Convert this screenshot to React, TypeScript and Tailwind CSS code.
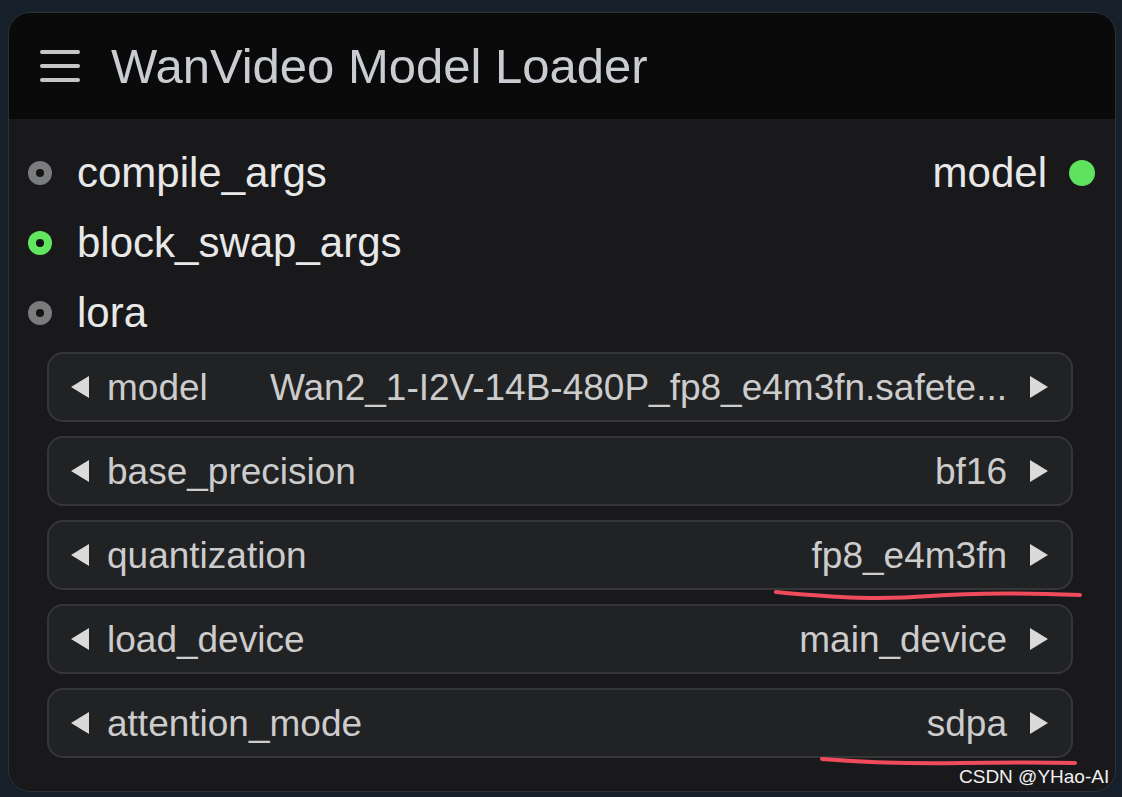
import React from "react";

type Widget = { label: string; value: string };

const widgets: Widget[] = [
  { label: "model", value: "Wan2_1-I2V-14B-480P_fp8_e4m3fn.safete..." },
  { label: "base_precision", value: "bf16" },
  { label: "quantization", value: "fp8_e4m3fn" },
  { label: "load_device", value: "main_device" },
  { label: "attention_mode", value: "sdpa" },
];

const inputs = [
  { name: "compile_args", linked: false },
  { name: "block_swap_args", linked: true },
  { name: "lora", linked: false },
];

export default function App() {
  return (
    <div className="relative h-[797px] w-[1122px] overflow-hidden bg-[#16202a] font-['Liberation_Sans',Arial,sans-serif]">
      <div className="pl-[8px] pr-[6px] pt-[12px]">
        <div className="h-[780px] overflow-hidden rounded-[22px] border border-[#2b3238] bg-[#19191b]">
          <header className="flex h-[106px] items-center gap-[31px] bg-[#0a0a0a] pl-[31px]">
            <HamburgerIcon />
            <h1 className="text-[49px] leading-none text-[#c9cdd2]">WanVideo Model Loader</h1>
          </header>

          <div className="pt-[19px]">
            {inputs.map((input, index) => (
              <div key={input.name} className="flex h-[70px] items-center pl-[19px] pr-[20px]">
                <SlotDot linked={input.linked} />
                <span className="ml-[25px] text-[42px] leading-none text-[#e8e8e8]">{input.name}</span>
                {index === 0 ? (
                  <div className="ml-auto flex items-center gap-[22px]">
                    <span className="text-[42px] leading-none text-[#e8e8e8]">model</span>
                    <span className="block h-[26px] w-[26px] rounded-full bg-[#5fe35f]" />
                  </div>
                ) : null}
              </div>
            ))}
          </div>

          <div className="mt-[4px] flex flex-col gap-[14px] pl-[38px] pr-[42px]">
            {widgets.map((widget) => (
              <div
                key={widget.label}
                className="flex h-[70px] items-center rounded-[16px] border-2 border-[#353638] bg-[#212224] pl-[21px] pr-[22px] text-[37px] leading-none text-[#cccccc]"
              >
                <ArrowLeft />
                <span className="ml-[17px]">{widget.label}</span>
                <span className="ml-auto whitespace-nowrap">{widget.value}</span>
                <ArrowRight />
              </div>
            ))}
          </div>
        </div>
      </div>

      <svg className="pointer-events-none absolute left-0 top-0" width="1122" height="797">
        <path
          d="M776 592 C 840 598, 880 600, 930 596 S 1030 593, 1080 595"
          stroke="#ef4b5c"
          strokeWidth="4"
          fill="none"
          strokeLinecap="round"
        />
        <path
          d="M822 759 C 860 762, 900 764, 960 763 S 1040 762, 1075 763"
          stroke="#ef4b5c"
          strokeWidth="4"
          fill="none"
          strokeLinecap="round"
        />
      </svg>

      <span className="absolute left-[959px] top-[767px] whitespace-nowrap text-[19px] leading-none text-[#f0f0f0]">
        CSDN @YHao-AI
      </span>
    </div>
  );
}

function HamburgerIcon() {
  return (
    <svg width="40" height="32" viewBox="0 0 40 32">
      <rect x="0" y="0" width="40" height="4" rx="2" fill="#c4c6c8" />
      <rect x="0" y="14" width="40" height="4" rx="2" fill="#c4c6c8" />
      <rect x="0" y="28" width="40" height="4" rx="2" fill="#c4c6c8" />
    </svg>
  );
}

function SlotDot({ linked }: { linked: boolean }) {
  return (
    <span
      className={
        linked
          ? "flex h-[24px] w-[24px] items-center justify-center rounded-full bg-[#62e65f]"
          : "flex h-[24px] w-[24px] items-center justify-center rounded-full bg-[#7a7b7d]"
      }
    >
      <span className="block h-[8px] w-[8px] rounded-full bg-[#141414]" />
    </span>
  );
}

function ArrowLeft() {
  return (
    <svg width="20" height="24" viewBox="0 0 20 24">
      <path d="M19 1 L1 12 L19 23 Z" fill="#dadada" />
    </svg>
  );
}

function ArrowRight() {
  return (
    <svg className="ml-[22px]" width="20" height="24" viewBox="0 0 20 24">
      <path d="M1 1 L19 12 L1 23 Z" fill="#dadada" />
    </svg>
  );
}
